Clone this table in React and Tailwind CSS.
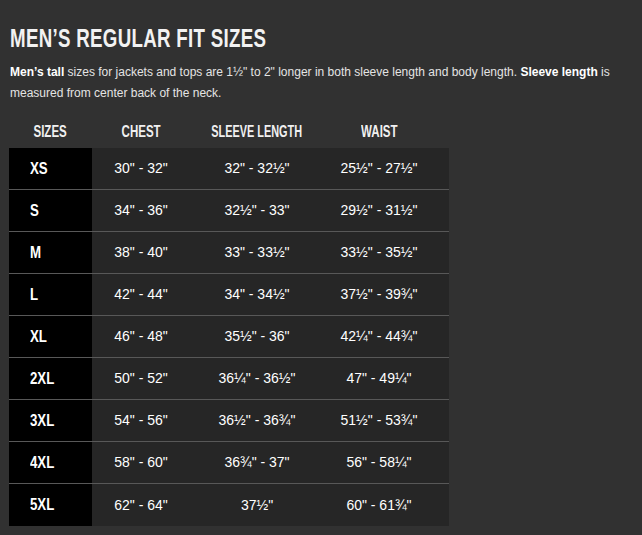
import React from 'react';

const rows = [
    ['XS', '30" - 32"', '32" - 32½"', '25½" - 27½"'],
    ['S', '34" - 36"', '32½" - 33"', '29½" - 31½"'],
    ['M', '38" - 40"', '33" - 33½"', '33½" - 35½"'],
    ['L', '42" - 44"', '34" - 34½"', '37½" - 39¾"'],
    ['XL', '46" - 48"', '35½" - 36"', '42¼" - 44¾"'],
    ['2XL', '50" - 52"', '36¼" - 36½"', '47" - 49¼"'],
    ['3XL', '54" - 56"', '36½" - 36¾"', '51½" - 53¾"'],
    ['4XL', '58" - 60"', '36¾" - 37"', '56" - 58¼"'],
    ['5XL', '62" - 64"', '37½"', '60" - 61¾"'],
];

const App = () => {
    return (
        <div className="w-[642px] h-[535px] bg-[#313131] overflow-hidden text-white" style={{ fontFamily: '"Liberation Sans", Arial, sans-serif' }}>
            {/* Title */}
            <h1 className="pl-[10px] pt-[24px] text-[26px] leading-[28px] font-bold text-[#f2f2f2] whitespace-nowrap">
                <span className="inline-block origin-left scale-x-[0.72] tracking-[0.4px]">MEN’S REGULAR FIT SIZES</span>
            </h1>
            <p className="pl-[10px] pr-[20px] mt-[10px] text-[12px] leading-[21px] text-[#e4e4e4]">
                <b className="text-white">Men’s tall</b> sizes for jackets and tops are 1½" to 2" longer in both sleeve length and body length. <b className="text-white">Sleeve length</b> is measured from center back of the neck.
            </p>

            {/* Table */}
            <div className="ml-[9px] mt-[14px] w-[440px]">
                <div className="grid grid-cols-[83px_98px_134px_110px_15px] h-[27px] items-center text-[16px] font-bold text-[#f0f0f0] whitespace-nowrap">
                    <div className="text-center"><span className="inline-block scale-x-[0.72]">SIZES</span></div>
                    <div className="text-center"><span className="inline-block scale-x-[0.72]">CHEST</span></div>
                    <div className="text-center"><span className="inline-block scale-x-[0.68]">SLEEVE LENGTH</span></div>
                    <div className="text-center"><span className="inline-block scale-x-[0.72]">WAIST</span></div>
                    <div />
                </div>
                <div className="mt-[3px] bg-[#262626]">
                    {rows.map((r, i) => (
                        <div
                            key={r[0]}
                            className={`grid grid-cols-[83px_98px_134px_110px_15px] h-[42px] items-center text-[14px] ${i < rows.length - 1 ? 'border-b border-[#585858]' : ''}`}
                        >
                            <div className="h-full bg-black flex items-center pl-[21px] text-[17px] font-bold">
                                <span className="inline-block origin-left scale-x-[0.78]">{r[0]}</span>
                            </div>
                            <div className="text-center">{r[1]}</div>
                            <div className="text-center">{r[2]}</div>
                            <div className="text-center">{r[3]}</div>
                            <div />
                        </div>
                    ))}
                </div>
            </div>
        </div>
    );
};

export default App;
